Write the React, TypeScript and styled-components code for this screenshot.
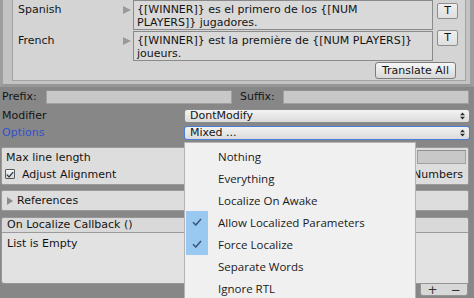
import React from "react";
import styled, { createGlobalStyle } from "styled-components";

const Global = createGlobalStyle`
  html, body { margin: 0; padding: 0; background: #878787; }
  body { font-family: "DejaVu Sans", Verdana, sans-serif; font-size: 11px; color: #141414; }
`;

const Page = styled.div`
  position: relative;
  width: 474px;
  height: 298px;
  overflow: hidden;
  background: #878787;
`;

const TopFrame = styled.div`
  background: #c3c3c3;
  border-left: 3px solid #9e9e9e;
  border-right: 4px solid #9e9e9e;
  border-bottom: 3px solid #979797;
  padding: 0 4px 3px 9px;
`;

const TopInner = styled.div`
  background: #d4d4d4;
  border: 1px solid #a2a2a2;
  border-top: none;
  padding: 0 7px 1px 5px;
  display: flex;
  flex-direction: column;
  gap: 1px;
`;

const LangRow = styled.div`
  display: grid;
  grid-template-columns: 105px 10px 300px 1fr;
  align-items: start;
`;

const LangLabel = styled.div`
  padding-top: 3px;
  line-height: 13px;
`;

const Arrow = styled.div<{ $top: number }>`
  width: 0;
  height: 0;
  margin-top: ${(p) => p.$top}px;
  border-left: 8px solid #9a9a9a;
  border-top: 4px solid transparent;
  border-bottom: 4px solid transparent;
`;

const TextBox = styled.div`
  height: 30px;
  box-sizing: border-box;
  border: 1px solid #8a8a8a;
  background: #d9d9d9;
  padding: 2px 3px 0;
  line-height: 13px;
  white-space: nowrap;
  overflow: hidden;
`;

const SmallButton = styled.div<{ $top: number }>`
  justify-self: end;
  width: 21px;
  height: 16px;
  margin-top: ${(p) => p.$top}px;
  box-sizing: border-box;
  border: 1px solid #8e8e8e;
  border-radius: 2px;
  background: linear-gradient(#efefef, #dfdfdf);
  display: flex;
  align-items: center;
  justify-content: center;
  line-height: 14px;
`;

const ActionsRow = styled.div`
  display: flex;
  justify-content: flex-end;
  padding-right: 2px;
`;

const Button = styled.div`
  height: 17px;
  box-sizing: border-box;
  padding: 0 6px;
  border: 1px solid #7c7c7c;
  border-radius: 3px;
  background: linear-gradient(#f6f6f6, #d8d8d8);
  line-height: 15px;
`;

const FieldRow = styled.div`
  display: grid;
  grid-template-columns: 44px 186px 51px 186px;
  align-items: center;
  padding-left: 2px;
  margin-top: 3px;
  height: 14px;
`;

const Label = styled.div<{ $blue?: boolean; $indent?: number }>`
  line-height: 14px;
  white-space: nowrap;
  padding-left: ${(p) => p.$indent ?? 0}px;
  color: ${(p) => (p.$blue ? "#3450d0" : "#141414")};
`;

const TextField = styled.div<{ $width?: number }>`
  height: 14px;
  width: ${(p) => (p.$width ? `${p.$width}px` : "auto")};
  box-sizing: border-box;
  border: 1px solid #a0a0a0;
  border-top-color: #909090;
  background: #c8c8c8;
`;

const PropRow = styled.div<{ $mt: number }>`
  display: grid;
  grid-template-columns: 182px 286px;
  align-items: center;
  padding-left: 2px;
  margin-top: ${(p) => p.$mt}px;
`;

const Dropdown = styled.div<{ $focused?: boolean }>`
  height: 14px;
  box-sizing: border-box;
  border: 1px solid ${(p) => (p.$focused ? "#4a7dda" : "#8a8a8a")};
  border-radius: 3px;
  background: linear-gradient(#f3f3f3, #dbdbdb);
  padding: 0 4px 0 5px;
  display: flex;
  align-items: center;
  justify-content: space-between;
  line-height: 12px;
`;

const Box = styled.div<{ $mt: number }>`
  margin: ${(p) => p.$mt}px 5px 0 1px;
  border: 1px solid #9a9a9a;
  border-radius: 2px;
  background: #dddddd;
`;

const SettingsBody = styled.div`
  padding-top: 2px;
`;

const SettingRow = styled.div<{ $h: number; $pl: number }>`
  height: ${(p) => p.$h}px;
  padding: 0 2px 0 ${(p) => p.$pl}px;
  display: flex;
  align-items: center;
  gap: 7px;
`;

const Spacer = styled.div`
  flex: 1;
`;

const RightText = styled.div`
  padding-right: 3px;
  white-space: nowrap;
`;

const Checkbox = styled.div`
  width: 10px;
  height: 10px;
  box-sizing: border-box;
  border: 1px solid #5a5a5a;
  border-radius: 1px;
  background: linear-gradient(#f4f4f4, #d6d6d6);
  display: flex;
  align-items: center;
  justify-content: center;
`;

const Foldout = styled.div`
  height: 19px;
  padding-left: 5px;
  display: flex;
  align-items: center;
  gap: 4px;
`;

const FoldArrow = styled.div`
  width: 0;
  height: 0;
  border-left: 6px solid #8c8c8c;
  border-top: 4px solid transparent;
  border-bottom: 4px solid transparent;
`;

const ListWrap = styled.div`
  margin: 6px 5px 0 1px;
  display: flex;
  flex-direction: column;
`;

const ListBox = styled.div`
  border: 1px solid #959595;
  border-radius: 3px 3px 0 3px;
  background: #e2e2e2;
  overflow: hidden;
`;

const ListHeader = styled.div`
  height: 14px;
  line-height: 14px;
  padding-left: 5px;
  background: #d9d9d9;
  border-bottom: 1px solid #9a9a9a;
`;

const ListBody = styled.div`
  height: 46px;
  padding: 4px 5px 0;
  line-height: 14px;
`;

const ListFooter = styled.div`
  align-self: flex-end;
  margin-right: 1px;
  width: 48px;
  height: 12px;
  box-sizing: border-box;
  border: 1px solid #959595;
  border-top: none;
  border-radius: 0 0 3px 3px;
  background: #d8d8d8;
  display: flex;
  justify-content: space-around;
  align-items: center;
  font-size: 12px;
  line-height: 10px;
  color: #333;
`;

const Menu = styled.div`
  position: absolute;
  left: 184px;
  top: 142px;
  width: 232px;
  height: 170px;
  box-sizing: border-box;
  border: 1px solid #b4b4b4;
  background: #f0f0f0;
  padding-top: 2px;
  font-family: "Open Sans", "Noto Sans", sans-serif;
  font-size: 11.5px;
  color: #1a1a1a;
`;

const MenuItem = styled.div`
  display: grid;
  grid-template-columns: 22px 1fr;
  column-gap: 10px;
  height: 22px;
  align-items: center;
  padding-left: 1px;
  white-space: nowrap;
`;

const CheckCell = styled.div<{ $checked?: boolean }>`
  height: 22px;
  background: ${(p) => (p.$checked ? "#99c9f1" : "transparent")};
  display: flex;
  align-items: center;
  justify-content: center;
`;

const UpDown = () => (
  <svg width="5" height="8" viewBox="0 0 5 8">
    <path d="M0 3.2 L2.5 0.4 L5 3.2 Z M0 4.8 L2.5 7.6 L5 4.8 Z" fill="#2a2a2a" />
  </svg>
);

const Tick = ({ color, w, h }: { color: string; w: number; h: number }) => (
  <svg width={w} height={h} viewBox="0 0 10 8">
    <path d="M1 4.2 L3.8 7 L9 1" fill="none" stroke={color} strokeWidth="1.5" />
  </svg>
);

const langs = [
  { name: "Spanish", lines: ["{[WINNER]} es el primero de los {[NUM", "PLAYERS]} jugadores."], t: 3 },
  { name: "French", lines: ["{[WINNER]} est la première de {[NUM PLAYERS]}", "joueurs."], t: -1 },
];

const options = [
  { label: "Nothing" },
  { label: "Everything" },
  { label: "Localize On Awake" },
  { label: "Allow Localized Parameters", checked: true },
  { label: "Force Localize", checked: true },
  { label: "Separate Words" },
  { label: "Ignore RTL" },
];

export default function App() {
  return (
    <Page>
      <Global />
      <TopFrame>
        <TopInner>
          {langs.map((l) => (
            <LangRow key={l.name}>
              <LangLabel>{l.name}</LangLabel>
              <Arrow $top={6} />
              <TextBox>
                {l.lines[0]}
                <br />
                {l.lines[1]}
              </TextBox>
              <SmallButton $top={l.t}>T</SmallButton>
            </LangRow>
          ))}
          <ActionsRow>
            <Button>Translate All</Button>
          </ActionsRow>
        </TopInner>
      </TopFrame>

      <FieldRow>
        <Label>Prefix:</Label>
        <TextField />
        <Label $indent={8}>Suffix:</Label>
        <TextField />
      </FieldRow>

      <PropRow $mt={5}>
        <Label>Modifier</Label>
        <Dropdown>
          <span>DontModify</span>
          <UpDown />
        </Dropdown>
      </PropRow>
      <PropRow $mt={3}>
        <Label $blue>Options</Label>
        <Dropdown $focused>
          <span>Mixed ...</span>
          <UpDown />
        </Dropdown>
      </PropRow>

      <Box $mt={7}>
        <SettingsBody>
          <SettingRow $h={14} $pl={4}>
            <span>Max line length</span>
            <Spacer />
            <TextField $width={49} />
          </SettingRow>
          <SettingRow $h={20} $pl={3}>
            <Checkbox>
              <Tick color="#1e2d4d" w={8} h={7} />
            </Checkbox>
            <span>Adjust Alignment</span>
            <Spacer />
            <RightText>Ignore Numbers</RightText>
          </SettingRow>
        </SettingsBody>
      </Box>

      <Box $mt={5}>
        <Foldout>
          <FoldArrow />
          <span>References</span>
        </Foldout>
      </Box>

      <ListWrap>
        <ListBox>
          <ListHeader>On Localize Callback ()</ListHeader>
          <ListBody>List is Empty</ListBody>
        </ListBox>
        <ListFooter>
          <span>+</span>
          <span>−</span>
        </ListFooter>
      </ListWrap>

      <Menu>
        {options.map((o) => (
          <MenuItem key={o.label}>
            <CheckCell $checked={o.checked}>
              {o.checked && <Tick color="#3a5678" w={10} h={8} />}
            </CheckCell>
            <span>{o.label}</span>
          </MenuItem>
        ))}
      </Menu>
    </Page>
  );
}
